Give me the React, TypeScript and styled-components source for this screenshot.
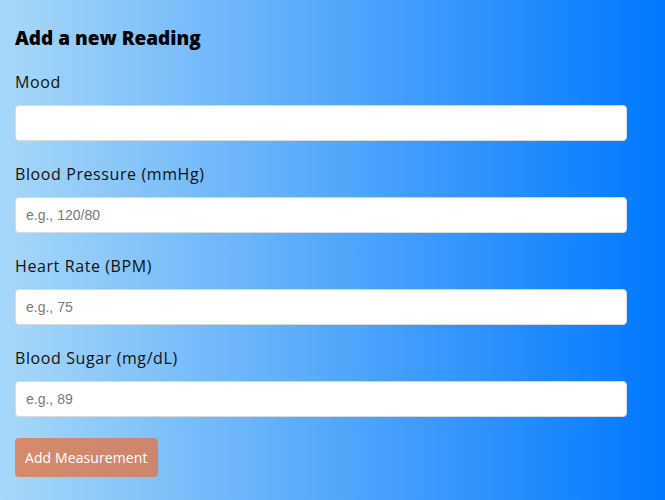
import React from "react";
import styled, { createGlobalStyle } from "styled-components";

const GlobalStyle = createGlobalStyle`
  html, body {
    margin: 0;
    padding: 0;
    min-height: 100%;
  }
  body {
    width: 665px;
    height: 500px;
    background: linear-gradient(to right, #a8d8f8 0%, #0078ff 100%);
    font-family: "Open Sans", "Liberation Sans", sans-serif;
    overflow: hidden;
  }
`;

const Form = styled.form`
  width: 612px;
  padding: 26px 15px 0;
  display: flex;
  flex-direction: column;
`;

const Title = styled.h2`
  margin: 0 0 20px;
  font-size: 19px;
  line-height: 24px;
  font-weight: 800;
  color: #000;
`;

const Field = styled.div`
  display: flex;
  flex-direction: column;
  margin-bottom: 21px;
`;

const Label = styled.label`
  font-size: 16px;
  line-height: 24px;
  letter-spacing: 0.6px;
  color: #111;
  margin-bottom: 11px;
`;

const Input = styled.input`
  box-sizing: border-box;
  width: 100%;
  height: 36px;
  padding: 0 10px;
  border: 1px solid #d6dbe0;
  border-radius: 4px;
  background: #fff;
  font-family: "Liberation Sans", Arial, sans-serif;
  font-size: 14px;
  outline: none;

  &::placeholder {
    color: #7a7a7a;
  }
`;

const SubmitButton = styled.button`
  align-self: flex-start;
  height: 39px;
  padding: 0 10px;
  border: none;
  border-radius: 4px;
  background: rgba(232, 112, 60, 0.74);
  color: #fff;
  font-family: "Open Sans", "Liberation Sans", sans-serif;
  font-size: 14px;
  letter-spacing: 0.1px;
  cursor: pointer;
`;

const fields = [
  { label: "Mood", placeholder: "" },
  { label: "Blood Pressure (mmHg)", placeholder: "e.g., 120/80" },
  { label: "Heart Rate (BPM)", placeholder: "e.g., 75" },
  { label: "Blood Sugar (mg/dL)", placeholder: "e.g., 89" },
];

export default function App() {
  return (
    <>
      <GlobalStyle />
      <Form onSubmit={(e) => e.preventDefault()}>
        <Title>Add a new Reading</Title>
        {fields.map((f) => (
          <Field key={f.label}>
            <Label>{f.label}</Label>
            <Input type="text" placeholder={f.placeholder} />
          </Field>
        ))}
        <SubmitButton type="submit">Add Measurement</SubmitButton>
      </Form>
    </>
  );
}
